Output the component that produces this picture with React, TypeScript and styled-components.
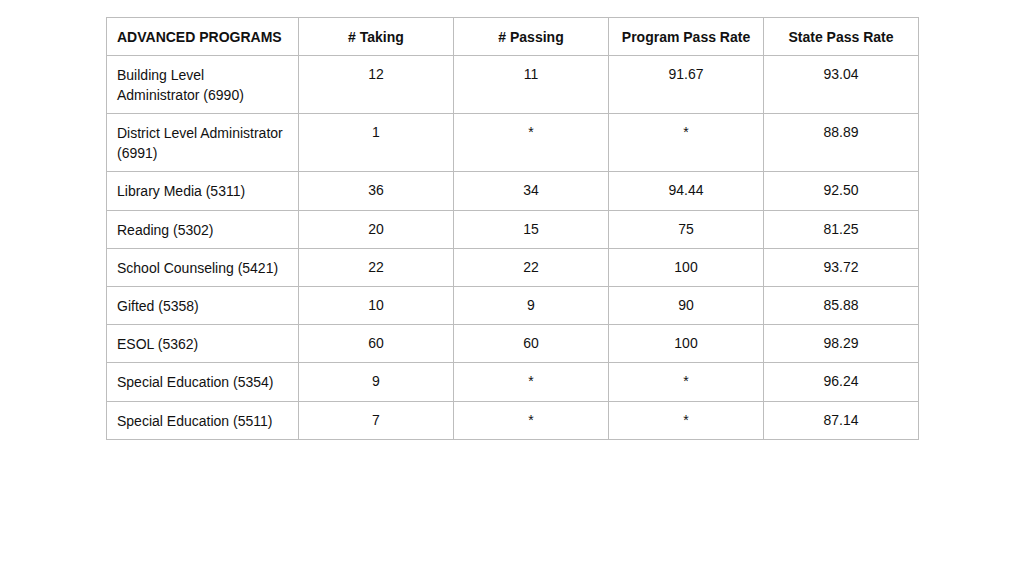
import styled, { createGlobalStyle } from "styled-components";

const GlobalStyle = createGlobalStyle`
  html, body {
    margin: 0;
    padding: 0;
    background: #ffffff;
  }
  body {
    font-family: "Liberation Sans", Arial, sans-serif;
    color: #111111;
  }
`;

const Page = styled.div`
  width: 1024px;
  height: 576px;
  padding: 17px 0 0 106px;
  box-sizing: border-box;
`;

const Table = styled.table`
  border-collapse: collapse;
  table-layout: fixed;
  width: 810px;
  font-size: 14px;
  line-height: 20px;

  & td, & th {
    box-sizing: border-box;
    border: 1px solid #bdbdbd;
    padding: 9px 10px 8.2px 10px;
    vertical-align: top;
    width: 155px;
  }

  & td:first-child, & th:first-child {
    width: 192px;
  }
`;

const HeadCell = styled.th<{ $left?: boolean }>`
  font-weight: bold;
  text-align: ${(p) => (p.$left ? "left" : "center")};
  color: #111;
  && {
    padding-bottom: 8px;
  }
`;

const NameCell = styled.td`
  text-align: left;
`;

const NumCell = styled.td`
  text-align: center;
  && {
    padding-top: 8px;
    padding-bottom: 9.2px;
  }
`;

const rows = [
  { name: ["Building Level", "Administrator (6990)"], v: ["12", "11", "91.67", "93.04"] },
  { name: ["District Level Administrator (6991)"], v: ["1", "*", "*", "88.89"] },
  { name: ["Library Media (5311)"], v: ["36", "34", "94.44", "92.50"] },
  { name: ["Reading (5302)"], v: ["20", "15", "75", "81.25"] },
  { name: ["School Counseling (5421)"], v: ["22", "22", "100", "93.72"] },
  { name: ["Gifted (5358)"], v: ["10", "9", "90", "85.88"] },
  { name: ["ESOL (5362)"], v: ["60", "60", "100", "98.29"] },
  { name: ["Special Education (5354)"], v: ["9", "*", "*", "96.24"] },
  { name: ["Special Education (5511)"], v: ["7", "*", "*", "87.14"] },
];

export default function App() {
  return (
    <>
      <GlobalStyle />
      <Page>
        <Table>
          <thead>
            <tr>
              <HeadCell $left>ADVANCED PROGRAMS</HeadCell>
              <HeadCell># Taking</HeadCell>
              <HeadCell># Passing</HeadCell>
              <HeadCell>Program Pass Rate</HeadCell>
              <HeadCell>State Pass Rate</HeadCell>
            </tr>
          </thead>
          <tbody>
            {rows.map((r) => (
              <tr key={r.name.join(" ")}>
                <NameCell>
                  {r.name.map((line, i) => (
                    <span key={i}>
                      {i > 0 && <br />}
                      {line}
                    </span>
                  ))}
                </NameCell>
                {r.v.map((x, i) => (
                  <NumCell key={i}>{x}</NumCell>
                ))}
              </tr>
            ))}
          </tbody>
        </Table>
      </Page>
    </>
  );
}
